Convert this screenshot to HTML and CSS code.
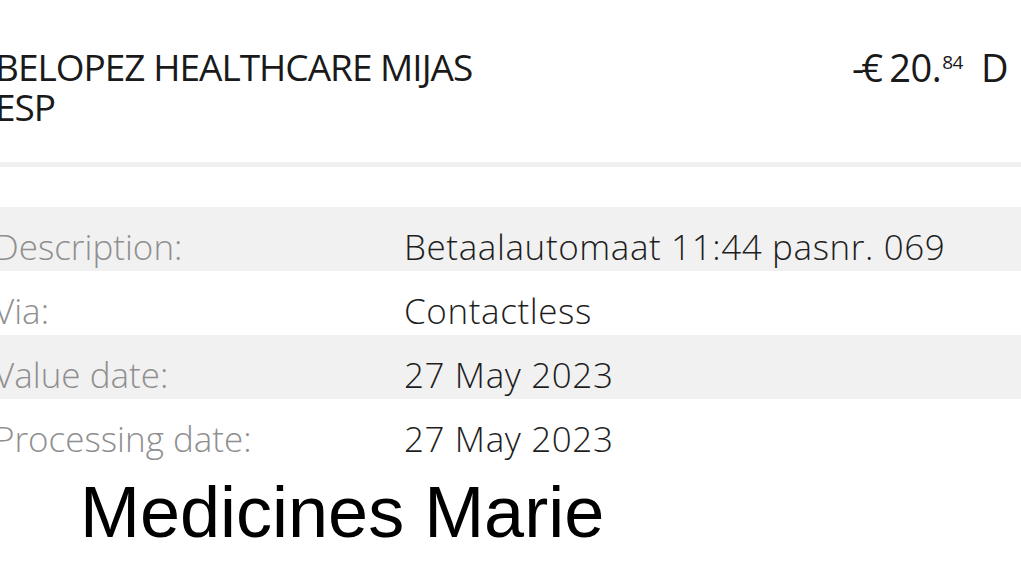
FILE: index.html
```html
<!DOCTYPE html>
<html>
<head>
<meta charset="utf-8">
<link rel="stylesheet" href="styles.css">
</head>
<body>
<div class="page">
  <div class="header">
    <div class="merchant">BELOPEZ HEALTHCARE MIJAS<br>ESP</div>
    <div class="amount"><span class="sign">-€</span> 20.<sup class="cents">84</sup><span class="flag">D</span></div>
  </div>
  <div class="divider"></div>
  <div class="details">
    <div class="row shaded"><div class="label">Description:</div><div class="value">Betaalautomaat 11:44 pasnr. 069</div></div>
    <div class="row"><div class="label">Via:</div><div class="value">Contactless</div></div>
    <div class="row shaded"><div class="label">Value date:</div><div class="value">27 May 2023</div></div>
    <div class="row"><div class="label">Processing date:</div><div class="value">27 May 2023</div></div>
  </div>
  <div class="caption">Medicines Marie</div>
</div>
</body>
</html>
```
FILE: styles.css
```css
html, body {
  margin: 0;
  padding: 0;
  background: #ffffff;
}
.page {
  width: 1021px;
  height: 577px;
  overflow: hidden;
  font-family: "Open Sans", "Noto Sans", sans-serif;
  color: #1a1a1a;
}
.header {
  display: flex;
  justify-content: space-between;
  align-items: flex-start;
  padding-top: 47px;
  margin-left: -5px;
  height: 115px;
}
.merchant {
  font-size: 37px;
  line-height: 40px;
  letter-spacing: -1px;
  font-weight: 400;
  white-space: nowrap;
}
.amount {
  font-size: 38px;
  line-height: 40px;
  letter-spacing: -0.5px;
  padding-right: 13px;
  white-space: nowrap;
}
.sign {
  letter-spacing: -3px;
}
.cents {
  font-size: 19px;
  letter-spacing: -0.5px;
  vertical-align: 0;
  position: relative;
  top: -13px;
  margin-left: 1px;
  margin-right: 18px;
}
.divider {
  height: 5px;
  background: #f0f0f0;
  margin-bottom: 40px;
}
.details {
  margin-left: -6px;
}
.row {
  display: flex;
  height: 64px;
  box-sizing: border-box;
  padding-top: 16px;
  line-height: 48px;
}
.row.shaded {
  background: #f1f1f1;
}
.label {
  width: 410px;
  flex-shrink: 0;
  color: #8f8f8f;
  font-size: 35px;
  font-weight: 300;
  letter-spacing: 0;
  white-space: nowrap;
}
.value {
  color: #1e1e1e;
  font-size: 35px;
  font-weight: 300;
  letter-spacing: 0.6px;
  white-space: nowrap;
}
.caption {
  font-family: "Liberation Sans", Arial, sans-serif;
  font-size: 72px;
  line-height: 80px;
  color: #000;
  padding-left: 80px;
  margin-top: 9px;
}
```
